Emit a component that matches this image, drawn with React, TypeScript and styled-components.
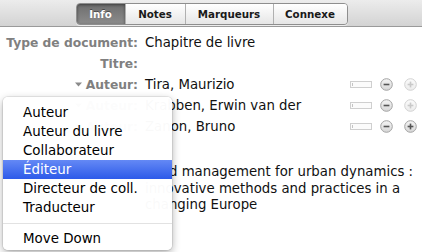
import React from 'react'
import styled, {createGlobalStyle, css} from 'styled-components'

const GlobalStyle = createGlobalStyle`
    html, body {
        margin: 0;
        padding: 0;
        background: #fff;
    }
    body {
        font-family: "DejaVu Sans", "Noto Sans", sans-serif;
        -webkit-font-smoothing: antialiased;
    }
`

const Page = styled.div`
    position: relative;
    width: 422px;
    height: 252px;
    overflow: hidden;
    background: #fff;
`

const Toolbar = styled.div`
    height: 27px;
    display: flex;
    justify-content: center;
    align-items: flex-start;
    padding-top: 3px;
    box-sizing: border-box;
    background: linear-gradient(#ececec, #d3d3d3);
    border-bottom: 1px solid #9a9a9a;
`

const Segmented = styled.div`
    display: flex;
    height: 20px;
    border: 1px solid #8e8e8e;
    border-radius: 4px;
    overflow: hidden;
    box-shadow: 0 1px 0 rgba(255, 255, 255, 0.6);
    margin-left: 1px;
`

const Segment = styled.div<{ $active?: boolean; $w: number }>`
    width: ${p => p.$w}px;
    display: flex;
    align-items: center;
    justify-content: center;
    font-size: 10.3px;
    font-weight: bold;
    color: #1a1a1a;
    background: linear-gradient(#ffffff, #e6e6e6);
    & + & {
        border-left: 1px solid #b0b0b0;
    }
    ${p => p.$active && css`
        color: #fff;
        background: linear-gradient(#6e6e6e, #8c8c8c);
        box-shadow: inset 0 1px 3px rgba(0, 0, 0, 0.45);
        text-shadow: 0 -1px 0 rgba(0, 0, 0, 0.4);
    `}
`

const Form = styled.div`
    padding-top: 5px;
    display: flex;
    flex-direction: column;
`

const Row = styled.div<{ $h?: number }>`
    display: flex;
    align-items: center;
    min-height: ${p => p.$h ?? 21}px;
`

const Label = styled.div`
    width: 138px;
    flex: none;
    display: flex;
    justify-content: flex-end;
    align-items: center;
    gap: 4px;
    font-size: 12.3px;
    font-weight: bold;
    color: #808080;
`

const Value = styled.div`
    flex: 1;
    padding-left: 7px;
    font-size: 13.3px;
    color: #111;
    white-space: nowrap;
    overflow: hidden;
`

const TitleValue = styled(Value)`
    line-height: 16.5px;
    align-self: flex-start;
`

const TitleLabel = styled(Label)`
    align-self: flex-start;
    line-height: 16.5px;
`

const Line = styled.span`
    display: block;
`

const Controls = styled.div`
    flex: none;
    width: 72px;
    display: flex;
    align-items: center;
`

const Menu = styled.div`
    position: absolute;
    left: 3px;
    top: 97px;
    width: 169px;
    padding: 6px 0 2px;
    box-sizing: border-box;
    background: rgba(255, 255, 255, 0.975);
    border-radius: 5px;
    box-shadow: 0 3px 9px rgba(0, 0, 0, 0.32), 0 0 0 1px rgba(0, 0, 0, 0.07);
`

const MenuItem = styled.div<{ $active?: boolean }>`
    height: 19px;
    line-height: 19px;
    padding-left: 20px;
    font-size: 13.4px;
    color: #000;
    white-space: nowrap;
    ${p => p.$active && css`
        color: #fff;
        background: linear-gradient(#6489f5, #2d5ae9);
    `}
`

const Separator = styled.div`
    height: 12px;
    display: flex;
    align-items: center;
    &::after {
        content: "";
        flex: 1;
        height: 1px;
        background: #e2e2e2;
    }
`

const Disclosure = () => (
    <svg width="7" height="5" viewBox="0 0 7 5">
        <path d="M0 0.5 L7 0.5 L3.5 4.5 Z" fill="#8a8a8a"/>
    </svg>
)

const FieldMode = () => (
    <svg width="22" height="7" viewBox="0 0 22 7" style={{marginRight: 8}}>
        <rect x="0.5" y="0.5" width="21" height="6" fill="#fbfbfb" stroke="#cfcfcf"/>
        <line x1="2.5" y1="2" x2="2.5" y2="5" stroke="#c4c4c4"/>
    </svg>
)

const RoundButton = ({kind, disabled}: { kind: 'minus' | 'plus'; disabled?: boolean }) => {
    const id = `g-${kind}-${disabled ? 'd' : 'e'}`
    const ink = disabled ? '#c9c9c9' : '#555'
    const ring = disabled ? '#d2d2d2' : '#a3a3a3'
    return (
        <svg width="13" height="13" viewBox="0 0 13 13" style={{marginRight: kind === 'minus' ? 11 : 0}}>
            <defs>
                <linearGradient id={id} x1="0" y1="0" x2="0" y2="1">
                    <stop offset="0" stopColor={disabled ? '#fbfbfb' : '#f5f5f5'}/>
                    <stop offset="1" stopColor={disabled ? '#ececec' : '#d6d6d6'}/>
                </linearGradient>
            </defs>
            <circle cx="6.5" cy="6.5" r="5.8" fill={`url(#${id})`} stroke={ring}/>
            <line x1="3.6" y1="6.5" x2="9.4" y2="6.5" stroke={ink} strokeWidth="1.6"/>
            {kind === 'plus' && <line x1="6.5" y1="3.6" x2="6.5" y2="9.4" stroke={ink} strokeWidth="1.6"/>}
        </svg>
    )
}

const creators = [
    {name: 'Tira, Maurizio', canAdd: false},
    {name: 'Krabben, Erwin van der', canAdd: false},
    {name: 'Zanon, Bruno', canAdd: true},
]

const menuItems = ['Auteur', 'Auteur du livre', 'Collaborateur', 'Éditeur', 'Directeur de coll.', 'Traducteur']

export default function App() {
    return (
        <Page>
            <GlobalStyle/>
            <Toolbar>
                <Segmented>
                    <Segment $active $w={48}>Info</Segment>
                    <Segment $w={59}>Notes</Segment>
                    <Segment $w={87}>Marqueurs</Segment>
                    <Segment $w={73}>Connexe</Segment>
                </Segmented>
            </Toolbar>
            <Form>
                <Row>
                    <Label>Type de document:</Label>
                    <Value>Chapitre de livre</Value>
                </Row>
                <Row>
                    <Label>Titre:</Label>
                    <Value/>
                </Row>
                {creators.map(c => (
                    <Row key={c.name}>
                        <Label><Disclosure/>Auteur:</Label>
                        <Value>{c.name}</Value>
                        <Controls>
                            <FieldMode/>
                            <RoundButton kind="minus"/>
                            <RoundButton kind="plus" disabled={!c.canAdd}/>
                        </Controls>
                    </Row>
                ))}
                <Row $h={27}/>
                <Row>
                    <TitleLabel>Titre du livre:</TitleLabel>
                    <TitleValue>
                        <Line>Land management for urban dynamics :</Line>
                        <Line>innovative methods and practices in a</Line>
                        <Line>changing Europe</Line>
                    </TitleValue>
                </Row>
            </Form>
            <Menu>
                {menuItems.map(item => (
                    <MenuItem key={item} $active={item === 'Éditeur'}>{item}</MenuItem>
                ))}
                <Separator/>
                <MenuItem>Move Down</MenuItem>
            </Menu>
        </Page>
    )
}
